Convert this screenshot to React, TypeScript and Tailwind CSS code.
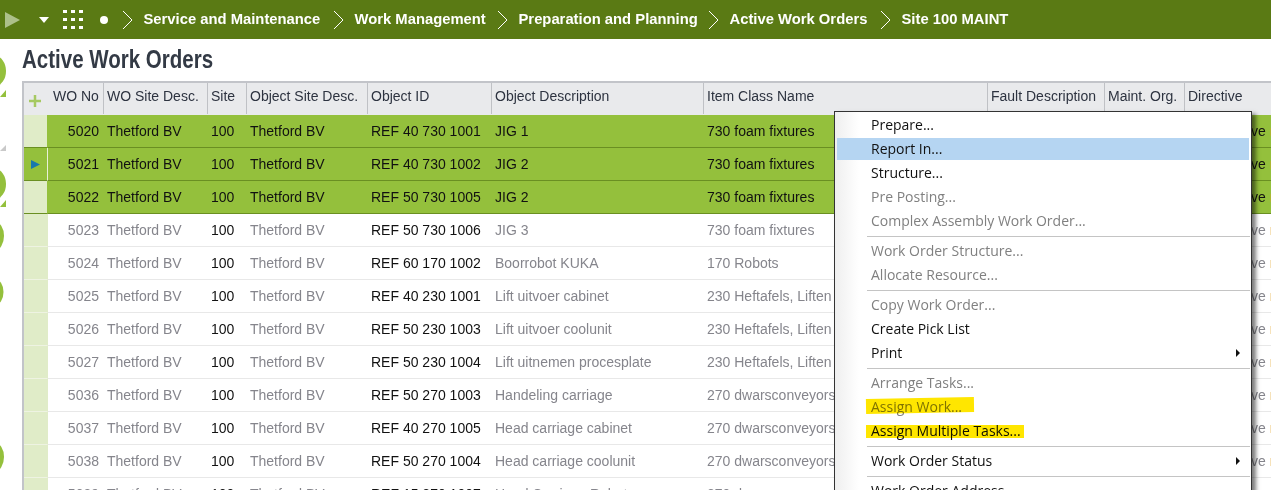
import React from 'react';

const crumbs = [
  { label: 'Service and Maintenance', width: 'w-[179px]' },
  { label: 'Work Management', width: 'w-[132px]' },
  { label: 'Preparation and Planning', width: 'w-[179px]' },
  { label: 'Active Work Orders', width: 'w-[140px]' },
  { label: 'Site 100 MAINT', width: 'w-[108px]' },
];

const columns = [
  { label: 'WO No', width: 'w-[56px]', pad: 'pl-[5px]' },
  { label: 'WO Site Desc.', width: 'w-[104px]', pad: 'pl-[3px]' },
  { label: 'Site', width: 'w-[39px]', pad: 'pl-[3px]' },
  { label: 'Object Site Desc.', width: 'w-[121px]', pad: 'pl-[3px]' },
  { label: 'Object ID', width: 'w-[124px]', pad: 'pl-[3px]' },
  { label: 'Object Description', width: 'w-[212px]', pad: 'pl-[3px]' },
  { label: 'Item Class Name', width: 'w-[284px]', pad: 'pl-[3px]' },
  { label: 'Fault Description', width: 'w-[117px]', pad: 'pl-[3px]' },
  { label: 'Maint. Org.', width: 'w-[80px]', pad: 'pl-[3px]' },
  { label: 'Directive', width: 'w-[86px]', pad: 'pl-[3px]' },
];

const rows = [
  ['5020', 'REF 40 730 1001', 'JIG 1', '730 foam fixtures'],
  ['5021', 'REF 40 730 1002', 'JIG 2', '730 foam fixtures'],
  ['5022', 'REF 50 730 1005', 'JIG 2', '730 foam fixtures'],
  ['5023', 'REF 50 730 1006', 'JIG 3', '730 foam fixtures'],
  ['5024', 'REF 60 170 1002', 'Boorrobot KUKA', '170 Robots'],
  ['5025', 'REF 40 230 1001', 'Lift uitvoer cabinet', '230 Heftafels, Liften'],
  ['5026', 'REF 50 230 1003', 'Lift uitvoer coolunit', '230 Heftafels, Liften'],
  ['5027', 'REF 50 230 1004', 'Lift uitnemen procesplate', '230 Heftafels, Liften'],
  ['5036', 'REF 50 270 1003', 'Handeling carriage', '270 dwarsconveyors'],
  ['5037', 'REF 40 270 1005', 'Head carriage cabinet', '270 dwarsconveyors'],
  ['5038', 'REF 50 270 1004', 'Head carriage coolunit', '270 dwarsconveyors'],
  ['5039', 'REF 15 270 1007', 'Head Carriage Robot', '270 dwarsconveyors'],
];

type MenuEntry = { label?: string; off?: boolean; sub?: boolean; active?: boolean; mark?: string };

const menu: MenuEntry[] = [
  { label: 'Prepare...' },
  { label: 'Report In...', active: true },
  { label: 'Structure...' },
  { label: 'Pre Posting...', off: true },
  { label: 'Complex Assembly Work Order...', off: true },
  {},
  { label: 'Work Order Structure...', off: true },
  { label: 'Allocate Resource...', off: true },
  {},
  { label: 'Copy Work Order...', off: true },
  { label: 'Create Pick List' },
  { label: 'Print', sub: true },
  {},
  { label: 'Arrange Tasks...', off: true },
  { label: 'Assign Work...', off: true, mark: 'top-[3px] h-[15px] w-[108px] -rotate-1' },
  { label: 'Assign Multiple Tasks...', mark: 'top-[6px] h-[13px] w-[158px]' },
  {},
  { label: 'Work Order Status', sub: true },
  {},
  { label: 'Work Order Address' },
];

function Chevron() {
  return (
    <svg width="11" height="20" viewBox="0 0 11 20" className="shrink-0">
      <path d="M1 1l9 9-9 9" fill="none" stroke="#fff" strokeWidth="1" />
    </svg>
  );
}

function TopBar() {
  return (
    <div className="flex h-[39px] items-center bg-[#5a7a14] text-white">
      <svg width="16" height="18" viewBox="0 0 16 18" className="ml-[5px] shrink-0">
        <path d="M0 1l15 8-15 8z" fill="#adc08a" />
      </svg>
      <svg width="10" height="6" viewBox="0 0 10 6" className="ml-[18px] shrink-0">
        <path d="M0 0h10l-5 6z" fill="#fff" />
      </svg>
      <svg width="20" height="19" viewBox="0 0 20 19" className="ml-[14px] shrink-0" fill="#fff">
        <rect x="0" y="0" width="4" height="3" />
        <rect x="8" y="0" width="4" height="3" />
        <rect x="16" y="0" width="4" height="3" />
        <rect x="0" y="8" width="4" height="3" />
        <rect x="8" y="8" width="4" height="3" />
        <rect x="16" y="8" width="4" height="3" />
        <rect x="0" y="16" width="4" height="3" />
        <rect x="8" y="16" width="4" height="3" />
        <rect x="16" y="16" width="4" height="3" />
      </svg>
      <span className="ml-[17px] h-2 w-2 shrink-0 rounded-full bg-white" />
      <div className="ml-[14px] flex items-center gap-[10.5px] font-['Liberation_Sans',sans-serif] text-[14.8px] font-bold">
        {crumbs.map((c) => (
          <React.Fragment key={c.label}>
            <Chevron />
            <span className={`whitespace-nowrap ${c.width}`}>{c.label}</span>
          </React.Fragment>
        ))}
      </div>
    </div>
  );
}

function GridTable() {
  return (
    <div className="ml-[22px] border-t-2 border-l-2 border-[#c2c4c9]">
      <table className="w-[1247px] table-fixed border-separate border-spacing-0 font-['Liberation_Sans',sans-serif] text-[14px]">
        <colgroup>
          <col className="w-[24px]" />
          {columns.map((c) => (
            <col key={c.label} className={c.width} />
          ))}
        </colgroup>
        <thead>
          <tr className="h-[32px] bg-[#e9eaec] text-[#2d3340]">
            <th className="p-0">
              <svg width="14" height="14" viewBox="0 0 14 14" className="ml-[4px] mt-[3px]">
                <path d="M7 1v12M1 7h12" stroke="#a6c962" strokeWidth="2.5" />
              </svg>
            </th>
            {columns.map((c) => (
              <th key={c.label} className="p-0 text-left align-top font-normal">
                <div className={`flex h-[31px] items-center whitespace-nowrap pb-[4px] ${c.pad} ${c.label === 'Directive' ? '' : 'border-r border-[#bfc1c5]'}`}>
                  {c.label}
                </div>
              </th>
            ))}
          </tr>
        </thead>
        <tbody>
          {rows.map((r, i) => {
            const selected = i < 3;
            const rowBg = selected ? 'bg-[#94c03c] border-[#6a8f22]' : 'bg-white border-[#e8e8e8]';
            const dim = selected ? 'text-[#111]' : 'text-[#85858c]';
            const cell = `h-[33px] overflow-hidden whitespace-nowrap border-b p-0 pl-[3px] ${rowBg}`;
            return (
              <tr key={r[0]}>
                <td className={`h-[33px] border-b border-r p-0 ${i === 1 ? 'border-b-[#6a8f22] border-r-[#e8f0d8] bg-[#94c03c]' : selected ? 'border-b-[#6a8f22] border-r-[#94c03c] bg-[#e0ecc8]' : 'border-b-[#eef3e2] border-r-[#e0ecc8] bg-[#e0ecc8]'}`}>
                  {i === 1 && (
                    <svg width="9" height="9" viewBox="0 0 9 9" className="ml-[7px]">
                      <path d="M0 0l9 4.5-9 4.5z" fill="#1877ad" />
                    </svg>
                  )}
                </td>
                <td className={`${cell} pr-[5px] text-right ${dim}`}>{r[0]}</td>
                <td className={`${cell} ${dim}`}>Thetford BV</td>
                <td className={`${cell} text-[#111]`}>100</td>
                <td className={`${cell} ${dim}`}>Thetford BV</td>
                <td className={`${cell} text-[#111]`}>{r[1]}</td>
                <td className={`${cell} pl-[2px] ${dim}`}>{r[2]}</td>
                <td className={`${cell} ${dim}`}>{r[3]}</td>
                <td className={cell} />
                <td className={cell} />
                <td className={`${cell} ${dim}`}>
                  Preventative <span className="text-[#e0a020]">m</span>
                </td>
              </tr>
            );
          })}
        </tbody>
      </table>
    </div>
  );
}

function ContextMenu() {
  return (
    <div className="absolute top-[111px] left-[834px] w-[418px] border border-[#333] bg-white py-px font-['Open_Sans',sans-serif] text-[14px] shadow-[4px_3px_4px_rgba(0,0,0,0.5)]">
      <div className="absolute top-0 bottom-0 left-0 w-[24px] bg-gradient-to-r from-[#efefef] to-white" />
      {menu.map((m, i) =>
        m.label ? (
          <div
            key={m.label}
            className={`relative mx-[2px] flex h-[24px] items-center pb-[2px] pl-[34px] pr-[9px] ${m.off ? 'text-[#808080]' : 'text-[#111]'}`}
          >
            {m.active && <div className="absolute inset-x-0 top-[1px] bottom-[1px] bg-[#b5d5f2]" />}
            <span className="relative whitespace-nowrap">{m.label}</span>
            {m.mark && <div className={`absolute left-[29px] bg-[#ffe600] mix-blend-multiply ${m.mark}`} />}
            {m.sub && (
              <svg width="4" height="8" viewBox="0 0 4 8" className="relative ml-auto mt-[2px]">
                <path d="M0 0l4 4-4 4z" fill="#111" />
              </svg>
            )}
          </div>
        ) : (
          <div key={i} className="relative flex h-[6px] items-center pl-[32px] pr-px">
            <div className="h-px w-full bg-[#c4c4c4]" />
          </div>
        ),
      )}
    </div>
  );
}

export default function App() {
  return (
    <div className="relative h-[490px] w-[1271px] overflow-hidden bg-white">
      <TopBar />
      <div className="flex h-[42px] items-center pl-[22px]">
        <h1 className="origin-left scale-x-[0.82] whitespace-nowrap font-['Liberation_Sans',sans-serif] text-[25px] font-bold text-[#333a45]">
          Active Work Orders
        </h1>
      </div>
      <GridTable />
      {/* cut off logo pieces down the left edge */}
      <svg width="8" height="490" viewBox="0 0 8 490" className="absolute top-0 left-0">
        <g fill="#94c03c">
          <ellipse cx="-5" cy="71" rx="11" ry="15" />
          <path d="M0 97l6-7v7z" />
          <ellipse cx="-5" cy="184" rx="11" ry="15" />
          <path d="M0 207l6-7v7z" />
          <ellipse cx="-5" cy="236" rx="9" ry="14" />
          <ellipse cx="-5" cy="292" rx="8.5" ry="13" />
          <ellipse cx="-5" cy="457" rx="9" ry="14" />
        </g>
        <path d="M0 151l6-6v6z" fill="#c9c9c9" />
      </svg>
      <ContextMenu />
    </div>
  );
}
